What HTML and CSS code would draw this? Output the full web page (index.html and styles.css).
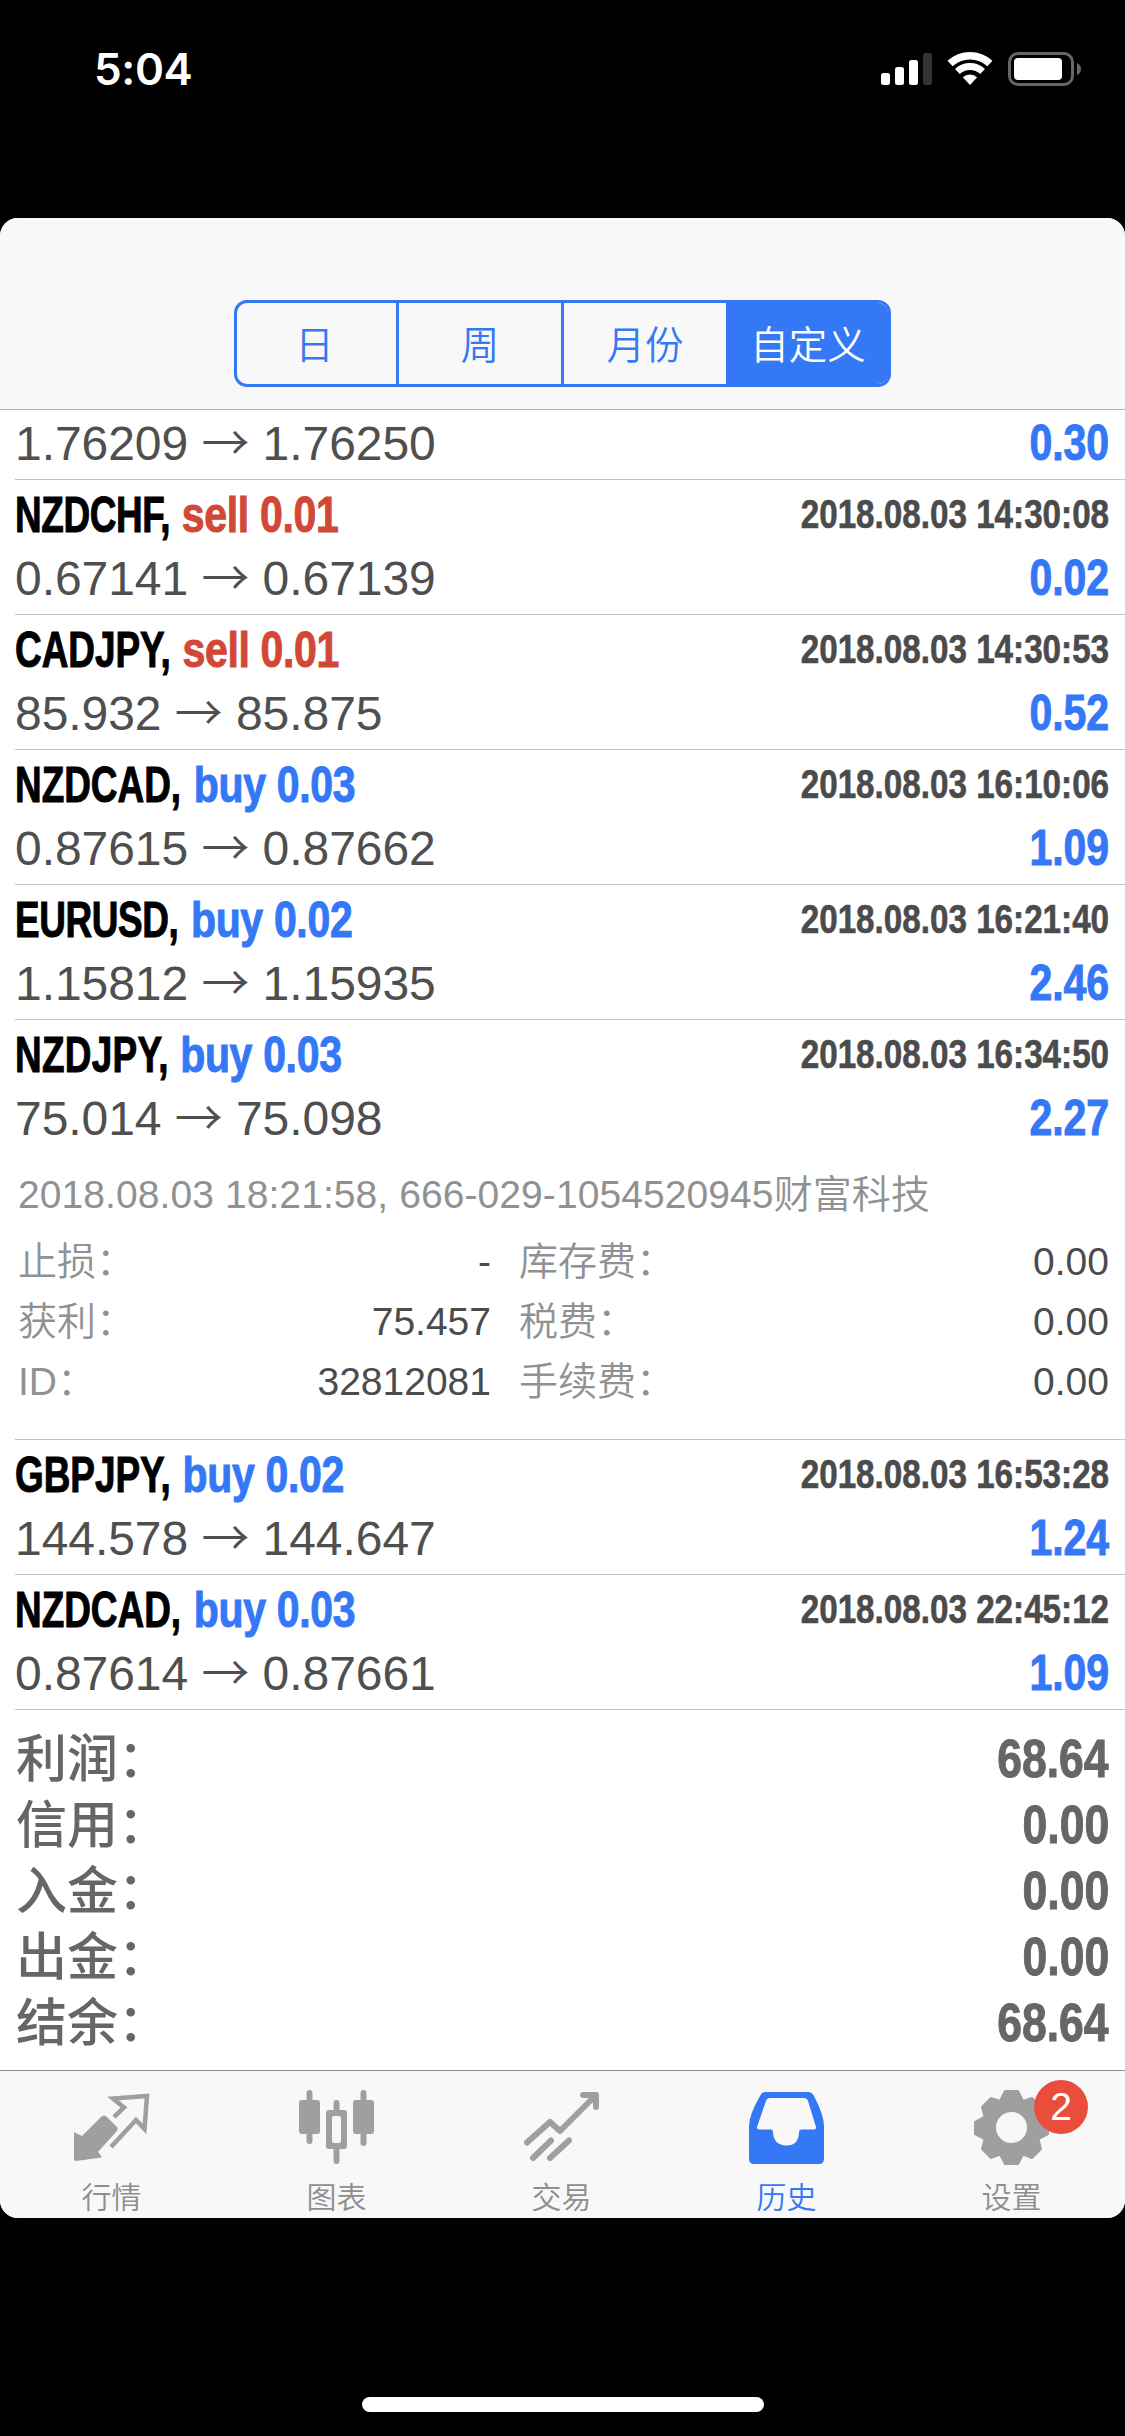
FILE: index.html
```html
<!DOCTYPE html>
<html lang="zh-CN">
<head>
<meta charset="utf-8">
<title>历史</title>
<link rel="stylesheet" href="styles.css">
</head>
<body>
<header class="status">
  <span class="clock">5:04</span>
  <svg class="status-icons" width="202" height="36" viewBox="0 0 202 36">
    <g fill="#fff">
      <rect x="1" y="21" width="9" height="12" rx="2.500"/>
      <rect x="15" y="15" width="9" height="18" rx="2.500"/>
      <rect x="29" y="8" width="9" height="25" rx="2.500"/>
      <rect x="43" y="1" width="9" height="32" rx="2.500" fill="#333"/>
      <path d="M82.800 25.300A10.500 10.500 0 0 1 97.200 25.300L90 33Z"/>
      <rect x="134" y="6" width="48" height="22" rx="4"/>
      <path d="M197 11Q201 13 201 17T197 23Z" fill="#666"/>
    </g>
    <path d="M70.100 11.600A29.200 29.200 0 0 1 109.900 11.600" fill="none" stroke="#fff" stroke-width="7.500"/>
    <path d="M77.400 19.500A18.500 18.500 0 0 1 102.600 19.500" fill="none" stroke="#fff" stroke-width="7"/>
    <rect x="129.500" y="1.500" width="63" height="31" rx="8.500" fill="none" stroke="#666" stroke-width="3"/>
  </svg>
</header>
<main class="app">
  <nav class="top">
    <div class="segments">
      <span>日</span><span>周</span><span>月份</span><span class="on">自定义</span>
    </div>
  </nav>
  <section class="list">
    <div class="deal partial"><div class="prices"><span>1.76209 <i>→</i> 1.76250</span><b>0.30</b></div></div>
    <div class="deal"><div class="head"><div class="order"><span class="sym tight">NZDCHF,</span><span class="sell">sell 0.01</span></div><time>2018.08.03 14:30:08</time></div><div class="prices"><span>0.67141 <i>→</i> 0.67139</span><b>0.02</b></div></div>
    <div class="deal"><div class="head"><div class="order"><span class="sym">CADJPY,</span><span class="sell">sell 0.01</span></div><time>2018.08.03 14:30:53</time></div><div class="prices"><span>85.932 <i>→</i> 85.875</span><b>0.52</b></div></div>
    <div class="deal"><div class="head"><div class="order"><span class="sym">NZDCAD,</span><span class="buy">buy 0.03</span></div><time>2018.08.03 16:10:06</time></div><div class="prices"><span>0.87615 <i>→</i> 0.87662</span><b>1.09</b></div></div>
    <div class="deal"><div class="head"><div class="order"><span class="sym tight">EURUSD,</span><span class="buy">buy 0.02</span></div><time>2018.08.03 16:21:40</time></div><div class="prices"><span>1.15812 <i>→</i> 1.15935</span><b>2.46</b></div></div>
    <div class="deal open"><div class="head"><div class="order"><span class="sym loose">NZDJPY,</span><span class="buy">buy 0.03</span></div><time>2018.08.03 16:34:50</time></div><div class="prices"><span>75.014 <i>→</i> 75.098</span><b>2.27</b></div>
      <div class="details">
        <p>2018.08.03 18:21:58, 666-029-1054520945财富科技</p>
        <dl>
          <dt>止损：</dt><dd>-</dd><dt>库存费：</dt><dd>0.00</dd>
          <dt>获利：</dt><dd>75.457</dd><dt>税费：</dt><dd>0.00</dd>
          <dt>ID：</dt><dd>32812081</dd><dt>手续费：</dt><dd>0.00</dd>
        </dl>
      </div>
    </div>
    <div class="deal"><div class="head"><div class="order"><span class="sym">GBPJPY,</span><span class="buy">buy 0.02</span></div><time>2018.08.03 16:53:28</time></div><div class="prices"><span>144.578 <i>→</i> 144.647</span><b>1.24</b></div></div>
    <div class="deal"><div class="head"><div class="order"><span class="sym">NZDCAD,</span><span class="buy">buy 0.03</span></div><time>2018.08.03 22:45:12</time></div><div class="prices"><span>0.87614 <i>→</i> 0.87661</span><b>1.09</b></div></div>
    <div class="summary">
      <div><span>利润：</span><b>68.64</b></div>
      <div><span>信用：</span><b>0.00</b></div>
      <div><span>入金：</span><b>0.00</b></div>
      <div><span>出金：</span><b>0.00</b></div>
      <div><span>结余：</span><b>68.64</b></div>
    </div>
  </section>
  <nav class="tabs">
    <a>
      <svg viewBox="0 0 76 76">
        <path d="M0 42L8 46L27 27Q30 24 33 27L43 37Q45 39 42 42L24 62L28 67Q26 68 24 68L2 71Q0 71 0 69Z" fill="#9f9f9f"/>
        <path d="M40 27L50 17.500L39 8.500L73 6L70.500 39L62 30L37 57" fill="none" stroke="#9f9f9f" stroke-width="4.500"/>
      </svg>
      <span>行情</span>
    </a>
    <a>
      <svg viewBox="0 0 76 76" fill="#9f9f9f">
        <rect x="0" y="10" width="21" height="34" rx="3"/><rect x="7.500" y="0" width="6" height="54" rx="3"/>
        <rect x="54" y="10" width="21" height="34" rx="3"/><rect x="61.500" y="0" width="6" height="56" rx="3"/>
        <path fill-rule="evenodd" d="M30 20H45Q48 20 48 23V56Q48 59 45 59H30Q27 59 27 56V23Q27 20 30 20ZM35 26Q33 26 33 28V51Q33 53 35 53H40Q42 53 42 51V28Q42 26 40 26Z"/>
        <path d="M34.500 21V13Q34.500 10 37.500 10T40.500 13V21ZM34.500 58V71Q34.500 74 37.500 74T40.500 71V58Z"/>
      </svg>
      <span>图表</span>
    </a>
    <a>
      <svg viewBox="0 0 76 76" fill="none" stroke="#9f9f9f" stroke-width="6" stroke-linecap="round" stroke-linejoin="round">
        <path d="M3 52.500L26 32L36 41L71 6M59 5H72V17"/>
        <path d="M9 68L27 50.500M26 68L45 50.500"/>
        <path d="M62 4H72V14Z" fill="#9f9f9f" stroke-width="3"/>
      </svg>
      <span>交易</span>
    </a>
    <a class="on">
      <svg viewBox="0 0 76 76">
        <path fill-rule="evenodd" fill="#3478f6" d="M16 2H59Q63 2 65 6Q75 25 75 36V69Q75 74 70 74H5Q0 74 0 69V36Q0 25 11 6Q13 2 16 2ZM21 8Q18 8 17 11L8 37Q7.500 39 10 39.500H22Q24 39.500 24 42V43Q25 55 37 55.500T50 43V42Q50 39.500 53 39.500H65Q67.500 39 67 37L59 11Q58 8 55 8Z"/>
      </svg>
      <span>历史</span>
    </a>
    <a>
      <svg viewBox="0 0 76 76">
        <path fill-rule="evenodd" fill="#9f9f9f" stroke="#9f9f9f" stroke-width="2" stroke-linejoin="round" d="M31 1H44L49 11L58 8L67 17L64.500 26.500L74 32V44L64.500 49L67 59L58 68L49 64.500L44 74H31L26 64.500L17 68L8 59L10.500 49L1 44V32L10.500 26.500L8 17L17 8L26 11ZM37.500 21A16.500 16.500 0 1 0 37.500 54A16.500 16.500 0 1 0 37.500 21Z"/>
      </svg>
      <em>2</em>
      <span>设置</span>
    </a>
  </nav>
</main>
<div class="home"></div>
</body>
</html>
```
FILE: styles.css
```css
* { box-sizing: border-box; }
body { margin: 0; width: 1125px; height: 2436px; background: #000; font-family: "Liberation Sans", "Noto Sans CJK SC", sans-serif; display: flex; flex-direction: column; }
.status { height: 218px; padding: 52px 43px 0 94px; display: flex; justify-content: space-between; align-items: flex-start; }
.clock { color: #fff; font: 600 44px/34px Inter, sans-serif; letter-spacing: -0.4px; }
.app { height: 2000px; background: #fff; border-radius: 18px; overflow: hidden; display: flex; flex-direction: column; }
.top { height: 192px; background: #f8f8f8; border-bottom: 1px solid #b2b2b2; display: flex; justify-content: center; align-items: flex-start; padding-top: 82px; }
.segments { width: 657px; height: 87px; border: 3px solid #3478f6; border-radius: 13px; display: grid; grid-template-columns: 162px 165px 162px 1fr; overflow: hidden; color: #3478f6; font: 350 38.5px/78px "Noto Sans CJK SC", sans-serif; text-align: center; }
.segments span { border-right: 3px solid #3478f6; }
.segments span:first-child { padding-right: 4px; }
.segments span:nth-child(3) { border-right: 0; }
.segments .on { background: #3478f6; color: #fff; padding-left: 5px; }
.list { flex: 1; }
.deal { margin-left: 15px; border-bottom: 1px solid #c3c3c3; padding: 0 16px 0 0; height: 135px; }
.partial { height: 70px; padding-top: 5px; }
.head { display: flex; justify-content: space-between; height: 70px; font: bold 50px/70px "Liberation Sans", sans-serif; -webkit-text-stroke: 1px currentColor; }
/* Condensed headline face: glyphs are narrowed horizontally */
.order { display: flex; transform: scaleX(0.82); transform-origin: left; letter-spacing: -0.4px; }
.sym { color: #000; letter-spacing: 0; transform: scaleX(0.9); transform-origin: left; margin-right: -7px; }
.tight { letter-spacing: -0.5px; }
.loose { letter-spacing: 0.4px; }
.sell { color: #d14836; }
.buy { color: #3478f6; }
.head time { color: #4b4b4b; font-size: 40.5px; line-height: 69px; height: 69px; transform: scaleX(0.82); transform-origin: right; -webkit-text-stroke-width: 0.6px; }
.prices { display: flex; justify-content: space-between; font-size: 48px; line-height: 55px; height: 55px; color: #4f4f4f; letter-spacing: -0.06px; }
.prices i { font: 350 48px/48px "Noto Sans CJK SC", sans-serif; }
.prices b { color: #3478f6; font: bold 50px/56px "Liberation Sans", sans-serif; transform: scaleX(0.82); transform-origin: right; -webkit-text-stroke: 1px currentColor; }
.deal.open { height: 420px; }
.details { color: #919191; font: 350 39px/60px "Liberation Sans", "Noto Sans CJK SC", sans-serif; padding: 20px 0 0 3px; }
.details p { margin: 0 0 7px; height: 60px; white-space: nowrap; letter-spacing: 0.08px; }
.details dl { margin: 0; display: grid; grid-template-columns: 240px 233px 270px 348px; grid-auto-rows: 60px; }
.details dt, .details dd { margin: 0; }
.details dt:nth-of-type(even) { padding-left: 28px; }
.details dd { text-align: right; color: #4b4b4b; }
.summary { padding: 16px 16px 0 16px; color: #666; font: 500 51px/68px "Liberation Sans", "Noto Sans CJK SC", sans-serif; }
.summary div { display: flex; justify-content: space-between; align-items: flex-start; height: 66px; }
.summary b { font: bold 53px/66px "Liberation Sans", sans-serif; transform: scaleX(0.84); transform-origin: right; -webkit-text-stroke: 1px currentColor; }
.tabs { height: 148px; background: #f8f8f8; border-top: 1px solid #8e8e8e; display: grid; grid-template-columns: repeat(5, 1fr); }
.tabs a { position: relative; display: flex; flex-direction: column; align-items: center; padding: 19px 1px 0 0; color: #8e8e8e; font: 350 30px/40px "Liberation Sans", "Noto Sans CJK SC", sans-serif; }
.tabs svg { width: 76px; height: 76px; }
.tabs a > span { margin: 12px 1px 0 0; }
.tabs .on { color: #3478f6; }
.tabs em { position: absolute; left: 134px; top: 9px; width: 54px; height: 54px; border-radius: 50%; background: #eb4d3d; color: #fff; font: normal 39px/54px "Liberation Sans", sans-serif; text-align: center; }
.home { width: 402px; height: 15px; border-radius: 8px; background: #fff; margin: 179px auto 0 362px; }
```
